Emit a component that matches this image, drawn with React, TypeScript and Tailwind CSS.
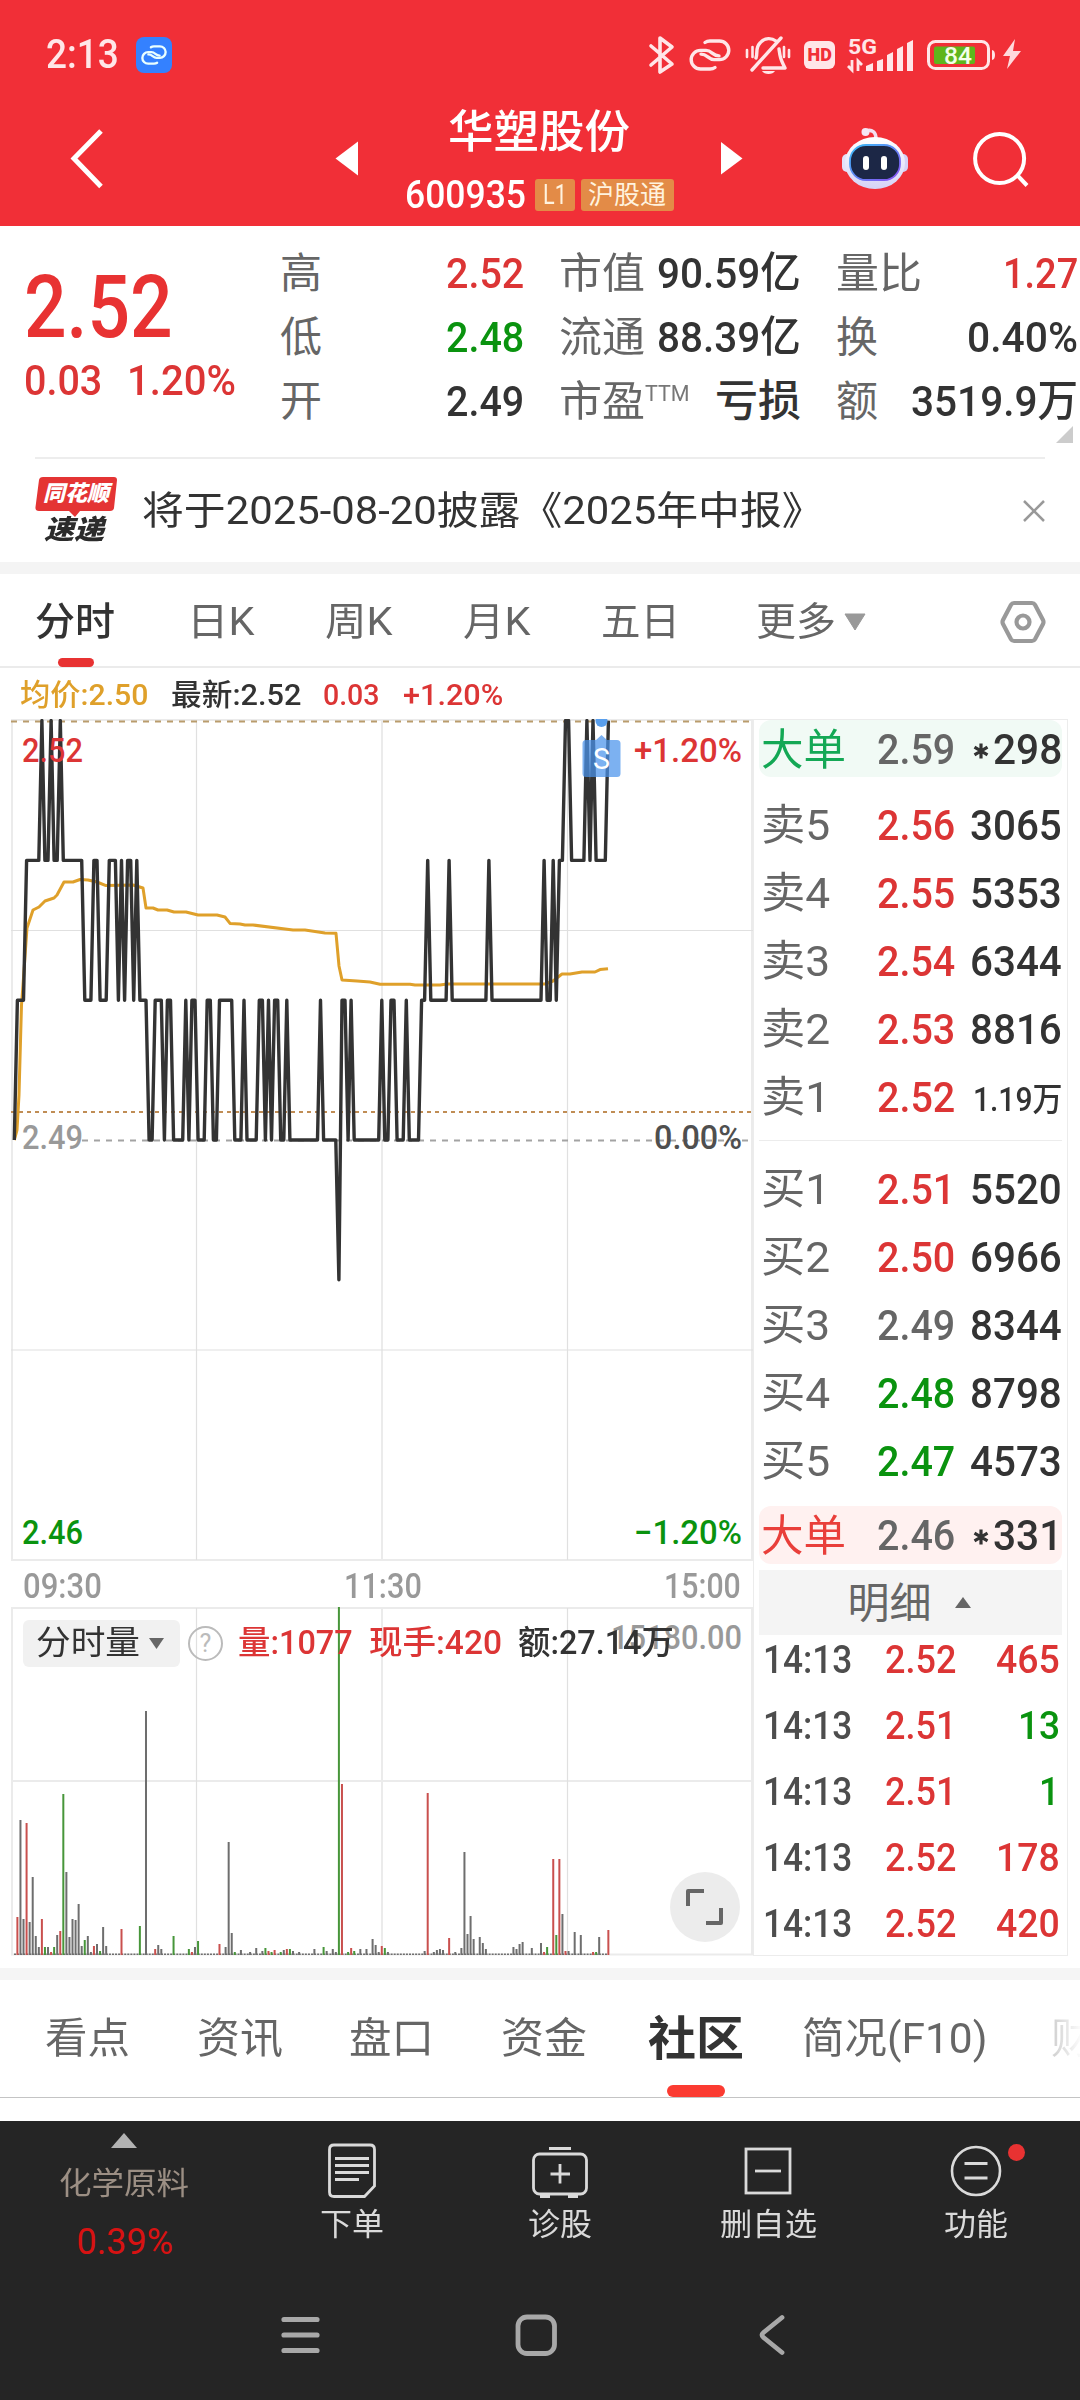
import { useLayoutEffect, useRef, type ReactNode } from 'react';
import clsx from 'clsx';

const RED = '#dc3535';
const GREEN = '#0a930f';
const INK = '#333333';

// Stretches a single line of text to the width given by its class.
function Fit({ className, children }: { className: string; children: ReactNode }) {
  const outer = useRef<HTMLSpanElement>(null);
  const inner = useRef<HTMLSpanElement>(null);

  useLayoutEffect(() => {
    if (!outer.current || !inner.current) return;
    const scale = outer.current.clientWidth / inner.current.offsetWidth;
    inner.current.style.transform = `scaleX(${scale})`;
  });

  return (
    <span ref={outer} className={clsx('block shrink-0 whitespace-nowrap', className)}>
      <span ref={inner} className="inline-block origin-left">
        {children}
      </span>
    </span>
  );
}

type IconProps = { box: [number, number, number, number]; className?: string; children: ReactNode };

function Icon({ box, className, children }: IconProps) {
  return (
    <svg
      viewBox={box.join(' ')}
      width={box[2]}
      height={box[3]}
      fill="none"
      className={clsx('block shrink-0', className)}
    >
      {children}
    </svg>
  );
}

function LinkGlyph({ color, width }: { color: string; width: number }) {
  return (
    <g stroke={color} strokeWidth={width} strokeLinecap="round">
      <path d="M26 28.500q-2 1.500-5 1.500H11.500a9.300 9.300 0 0 1 0-18.600H17c6 0 6.500 5.500 13 5.500" />
      <path d="M16 3.500Q18 2 21 2h9.500a9.300 9.300 0 0 1 0 18.600H25c-6 0-6.500-5.500-13-5.500" />
    </g>
  );
}

function StatusBar() {
  return (
    <div className="flex h-24 items-center pt-[13px] text-[#ffe6e8]">
      <Fit className="ml-[46px] w-[73px] text-[40px] leading-[46px] font-medium">2:13</Fit>
      <div className="ml-[17px] flex size-9 items-center justify-center rounded-lg bg-[#3481ff]">
        <svg viewBox="0 0 42 32" width="26" height="20" fill="none">
          <LinkGlyph color="#eaffff" width={3.8} />
        </svg>
      </div>
      <Icon box={[648, 34, 27, 40]} className="ml-[476px]">
        <path
          d="M651 45l21 18-12 8V37l12 9-21 18"
          stroke="#ffe6e8"
          strokeWidth="3.6"
          strokeLinejoin="round"
          strokeLinecap="round"
        />
      </Icon>
      <svg viewBox="0 0 42 32" width="42" height="32" fill="none" className="ml-3.5">
        <LinkGlyph color="#ffe6e8" width={3.4} />
      </svg>
      <Icon box={[745, 35, 46, 40]} className="ml-3.5">
        <g stroke="#ffe6e8" strokeWidth="3.4" strokeLinecap="round">
          <path d="M781 38l-29 32" />
          <path d="M756 58c2-5-1-10 4-15 5-6 12-5 16-2" />
          <path d="M779 49c1 7 1 9 6 19h-22" strokeLinejoin="round" />
          <path d="M747 50v7M752.500 47v10M784 47v10M789 50v7" strokeWidth="2.6" />
        </g>
        <path d="M762 71h13c-2 4-11 4-13 0z" fill="#ffe6e8" />
      </Icon>
      <div className="ml-[13px] flex h-7 w-[31px] items-center justify-center rounded-md bg-[#ffe6e8]">
        <Fit className="w-[24px] text-[18px] leading-7 font-black text-[#f12f37]">HD</Fit>
      </div>
      <Icon box={[845, 34, 70, 38]} className="ml-2.5">
        <text x="848" y="52" fill="#ffe6e8" fontSize="21" fontWeight="700" textLength="29" lengthAdjust="spacingAndGlyphs">
          5G
        </text>
        <path
          d="M866 64l7-3v8h-7zM877 59l6-2v12h-6zM887 53l6-3v19h-6zM897 47l6-3v25h-6zM907 41l6-3v31h-6z"
          fill="#ffe6e8"
        />
        <path d="M852 58v10l-4-4M858 69V59l4 4" stroke="#ffe6e8" strokeWidth="2.8" />
      </Icon>
      <Icon box={[925, 37, 72, 34]} className="ml-2.5">
        <rect x="928.500" y="40.500" width="60" height="27" rx="7" stroke="#ffe6e8" strokeWidth="3" />
        <rect x="934" y="45.500" width="41" height="17.500" rx="2" fill="#5fb51c" />
        <path d="M992 49c4 0 4 10 0 10z" fill="#ffe6e8" />
        <text x="944" y="62.500" fill="#f4ffe9" fontSize="23" fontWeight="500" textLength="28" lengthAdjust="spacingAndGlyphs">
          84
        </text>
      </Icon>
      <Icon box={[1002, 38, 20, 33]} className="ml-[5px]">
        <path d="M1015 39l-12 17h7l-3 13 14-18h-8z" fill="#ffd9dc" />
      </Icon>
    </div>
  );
}

function TitleBar() {
  return (
    <div className="flex h-[130px] items-center pb-[5px]">
      <Icon box={[69, 126, 38, 64]} className="ml-[69px]">
        <path d="M101 130L74 157.500 101 185.500" stroke="#fff" strokeWidth="5" />
      </Icon>
      <Icon box={[335, 142, 23, 36]} className="ml-[228px]">
        <path d="M358 142.500v34L335.500 159.500z" fill="#fff" />
      </Icon>
      <div className="mr-px ml-[46px] flex w-[270px] flex-col items-center">
        <Fit className="w-[182px] text-[45px] leading-[52px] font-medium text-white">华塑股份</Fit>
        <div className="mt-5 flex h-8 items-center">
          <Fit className="w-[121px] text-[39px] leading-8 font-medium text-white">600935</Fit>
          <div className="ml-[9px] flex h-8 w-10 items-center justify-center rounded-[3px] bg-[#e38b47]">
            <Fit className="w-[24px] text-[27px] leading-8 text-[#fff3df]">L1</Fit>
          </div>
          <div className="ml-1.5 flex h-8 w-[93px] items-center justify-center rounded-[3px] bg-[#e38b47]">
            <Fit className="w-[78px] text-[26px] leading-8 text-[#fff3df]">沪股通</Fit>
          </div>
        </div>
      </div>
      <Icon box={[721, 142, 22, 36]} className="ml-[46px]">
        <path d="M721 143v32.500l21.500-16z" fill="#fff" />
      </Icon>
      <Icon box={[840, 125, 70, 66]} className="ml-[97px]">
        <defs>
          <linearGradient id="shell" x1="0" y1="0" x2="0" y2="1">
            <stop offset="0" stopColor="#ffffff" />
            <stop offset="1" stopColor="#d5d3f6" />
          </linearGradient>
          <linearGradient id="visor" x1="0" y1="0" x2="1" y2="1">
            <stop offset="0" stopColor="#38bdf8" />
            <stop offset="1" stopColor="#8b4df0" />
          </linearGradient>
        </defs>
        <path d="M866 130c6-2 10 1 10 8" stroke="#f3dff0" strokeWidth="3.500" />
        <circle cx="865.500" cy="131" r="4" fill="#f6e6f4" />
        <rect x="842" y="153" width="12" height="18" rx="5" fill="#e3e1fb" />
        <rect x="896" y="153" width="12" height="18" rx="5" fill="#d5d1f7" />
        <ellipse cx="875" cy="162" rx="30" ry="26" fill="url(#shell)" />
        <rect x="850" y="144" width="50" height="35" rx="16" fill="#1c2746" stroke="url(#visor)" strokeWidth="1.800" />
        <rect x="863" y="155" width="6" height="14" rx="3" fill="#fff" />
        <rect x="881" y="155" width="6" height="14" rx="3" fill="#fff" />
      </Icon>
      <Icon box={[970, 128, 60, 62]} className="ml-[60px]">
        <circle cx="999.600" cy="158.500" r="24.500" stroke="#fff" strokeWidth="4" />
        <path d="M1017 175l10 10.500" stroke="#fff" strokeWidth="4" />
      </Icon>
    </div>
  );
}

type Stat = { label: string; labelW: string; value: string; valueW: string; tone: string; sup?: string };

const STATS: Stat[][] = [
  [
    { label: '高', labelW: 'w-[42px]', value: '2.52', valueW: 'w-[78px]', tone: 'text-[#dc3535]' },
    { label: '低', labelW: 'w-[42px]', value: '2.48', valueW: 'w-[78px]', tone: 'text-[#0a930f]' },
    { label: '开', labelW: 'w-[42px]', value: '2.49', valueW: 'w-[78px]', tone: 'text-[#333]' },
  ],
  [
    { label: '市值', labelW: 'w-[86px]', value: '90.59亿', valueW: 'w-[144px]', tone: 'text-[#333]' },
    { label: '流通', labelW: 'w-[86px]', value: '88.39亿', valueW: 'w-[144px]', tone: 'text-[#333]' },
    { label: '市盈', labelW: 'w-[86px]', value: '亏损', valueW: 'w-[86px]', tone: 'text-[#333]', sup: 'TTM' },
  ],
  [
    { label: '量比', labelW: 'w-[86px]', value: '1.27', valueW: 'w-[75px]', tone: 'text-[#dc3535]' },
    { label: '换', labelW: 'w-[42px]', value: '0.40%', valueW: 'w-[111px]', tone: 'text-[#333]' },
    { label: '额', labelW: 'w-[42px]', value: '3519.9万', valueW: 'w-[167px]', tone: 'text-[#333]' },
  ],
];

function QuoteSummary() {
  return (
    <section className="relative flex h-[231px] pt-[15px]">
      <div className="w-[280px] shrink-0 pl-6">
        <Fit className="mt-4 w-[149px] text-[87px] leading-[100px] font-medium text-[#e83232]">2.52</Fit>
        <div className="flex text-[43px] leading-[46px] font-medium text-[#dc3535]">
          <Fit className="w-[78px]">0.03</Fit>
          <Fit className="ml-[25px] w-[109px]">1.20%</Fit>
        </div>
      </div>
      <div className="flex gap-[35px]">
        {STATS.map((column, c) => (
          <div key={c} className={c === 0 ? 'w-[244px]' : 'w-[242px]'}>
            {column.map((stat) => (
              <div key={stat.label} className="flex h-16 items-center justify-between leading-[60px]">
                <div className="flex pt-0.5">
                  <Fit className={clsx('text-[42px] text-[#666]', stat.labelW)}>{stat.label}</Fit>
                  {stat.sup && <Fit className="w-[45px] text-[22px] leading-[44px] text-[#777]">{stat.sup}</Fit>}
                </div>
                <Fit className={clsx('text-[43px] font-medium', stat.valueW, stat.tone)}>{stat.value}</Fit>
              </div>
            ))}
          </div>
        ))}
      </div>
      <Icon box={[0, 0, 17, 17]} className="absolute right-[7px] bottom-[14px]">
        <path d="M17 0v17H0z" fill="#ccc" />
      </Icon>
    </section>
  );
}

function NoticeBar() {
  return (
    <div className="mx-[35px] flex h-[105px] items-center border-t-2 border-[#ededed]">
      <div className="relative flex h-[68px] w-[82px] flex-col items-center italic">
        <Icon box={[0, 0, 82, 40]} className="absolute top-0 left-0">
          <path
            d="M8 0h71q3 0 3 3l-3 28q-.500 3-4 3H45l-5 6-6-6H4q-4 0-3.500-4L4 3q.500-3 4-3z"
            fill="#e43434"
          />
        </Icon>
        <Fit className="relative w-[66px] text-[22px] leading-[34px] font-black text-white">同花顺</Fit>
        <Fit className="mr-1 w-[60px] text-[27px] leading-[38px] font-black text-[#2c2c2c]">速递</Fit>
      </div>
      <Fit className="ml-[25px] w-[682px] text-[39px] leading-[50px] text-[#333]">
        将于2025-08-20披露《2025年中报》
      </Fit>
      <Icon box={[0, 0, 22, 22]} className="ml-auto">
        <path d="M1 1l20 20M21 1L1 21" stroke="#999" strokeWidth="2.500" />
      </Icon>
    </div>
  );
}

function PeriodTabs() {
  return (
    <nav className="flex h-[94px] items-center border-b-2 border-[#ebebeb] pt-[3px] text-[39px] leading-[50px] text-[#666]">
      <div className="relative ml-[35px] font-medium text-[#333]">
        <Fit className="w-[80px]">分时</Fit>
        <span className="absolute top-[61px] left-[23px] h-[9px] w-9 rounded-full bg-[#e83232]" />
      </div>
      <Fit className="ml-[72px] w-[67px]">日K</Fit>
      <Fit className="ml-[71px] w-[67px]">周K</Fit>
      <Fit className="ml-[71px] w-[67px]">月K</Fit>
      <Fit className="ml-[71px] w-[79px]">五日</Fit>
      <Fit className="ml-[76px] w-[80px]">更多</Fit>
      <Icon box={[0, 0, 22, 18]} className="ml-2">
        <path d="M1 1h20L11 17z" fill="#999" stroke="#999" strokeLinejoin="round" />
      </Icon>
      <Icon box={[0, 0, 46, 46]} className="ml-[134px]">
        <path
          d="M14 4h18q2 0 3 1.700l8 15.300q1 2 0 4l-8 15.300q-1 1.700-3 1.700H14q-2 0-3-1.700L3 25q-1-2 0-4l8-15.300Q12 4 14 4z"
          stroke="#999"
          strokeWidth="4.200"
        />
        <circle cx="23" cy="23" r="6.500" stroke="#999" strokeWidth="4.200" />
      </Icon>
    </nav>
  );
}

const minuteX = (minute: number) => 14.33 + minute * 3.062;
const priceY = (price: number) => 1140 - (price - 249) * 139.8;

// [minute, price in cents], only where the line turns
const PRICE: [number, number][] = [
  [0, 249], [1, 250], [3, 250], [4, 251], [8, 251], [9, 252], [10, 251], [11, 251], [12, 252], [13, 251],
  [14, 251], [15, 252], [16, 251], [22, 251], [23, 250], [25, 250], [26, 251], [27, 251], [28, 250], [30, 250],
  [31, 251], [33, 251], [34, 250], [35, 251], [36, 250], [37, 251], [38, 251], [39, 250], [40, 251], [41, 250],
  [43, 250], [44, 249], [45, 249], [46, 250], [48, 250], [49, 249], [50, 250], [51, 250], [52, 249], [55, 249],
  [56, 250], [57, 249], [58, 250], [59, 250], [60, 249], [62, 249], [63, 250], [64, 250], [65, 249], [66, 249],
  [67, 250], [71, 250], [72, 249], [74, 249], [75, 250], [76, 249], [79, 249], [80, 250], [81, 250], [82, 249],
  [83, 250], [84, 249], [85, 250], [86, 250], [87, 249], [88, 249], [89, 250], [90, 249], [99, 249], [100, 250],
  [101, 249], [105, 249], [106, 248], [107, 250], [108, 250], [109, 249], [110, 250], [111, 249], [119, 249],
  [120, 250], [121, 249], [122, 249], [123, 250], [124, 250], [125, 249], [127, 249], [128, 250], [129, 249],
  [132, 249], [133, 250], [134, 250], [135, 251], [136, 250], [141, 250], [142, 251], [143, 250], [154, 250],
  [155, 251], [156, 250], [172, 250], [173, 251], [174, 250], [175, 250], [176, 251], [177, 250], [178, 251],
  [179, 251], [180, 252], [181, 252], [182, 251], [186, 251], [187, 252], [188, 251], [189, 252], [190, 251],
  [193, 251], [194, 252],
];

const AVERAGE =
  '14.3,1140 17,1130 19,1095 21.5,1005 23,985 27,928 33,910 39,907 45,901 54,898 57,895 64,882 73,882 80,879.5 88,880 97,882 106,885.600 133,885 143,888 146,908 153,908 158,910 167,910 174,912 186,912 198,915 217,915 225,917 230,923.400 240,924 245,925 253,925 293,930 305,930 325,933 336,933.300 339,966 342,980 357,981 370,982 380,984.300 410,984.300 415,985 440,985 447,984 545,984 553,981 562,974 570,974 582,972 595,972 600,969.600 608,968.700';

const label = { fontSize: 33, fontWeight: 500, lengthAdjust: 'spacingAndGlyphs' as const };

function PriceChart() {
  const line = PRICE.map(([m, p]) => `${minuteX(m).toFixed(1)},${priceY(p).toFixed(1)}`).join(' ');

  return (
    <Icon box={[0, 719, 753, 843]}>
      <g stroke="#ebebeb" strokeWidth="2">
        <path d="M12 719v842M752 719v842M382 720v840M11 720h742M11 1560h742" />
        <path d="M196.500 720v840M567.500 720v840M11 930.500h742M11 1350h742" stroke="#e0e0e0" strokeWidth="1.200" />
      </g>
      <path d="M11 721.500h742" stroke="#b99c6c" strokeWidth="1.800" strokeDasharray="6 6" />
      <path d="M11 1112h742" stroke="#c08d55" strokeWidth="2" strokeDasharray="4 4" />
      <path d="M82 1140.500h670" stroke="#a3a3a3" strokeWidth="1.800" strokeDasharray="6 6" />
      <polyline points={AVERAGE} stroke="#dfa02a" strokeWidth="3" strokeLinejoin="round" />
      <polyline points={line} stroke={INK} strokeWidth="3.400" strokeLinejoin="round" />

      <circle cx="601.500" cy="721" r="6" fill="#5a9fec" />
      <path
        d="M586 740h10l5.500-5 5.500 5h10q3.500 0 3.500 3.500v30q0 3.500-3.500 3.500h-31q-3.500 0-3.500-3.500v-30q0-3.500 3.500-3.500z"
        fill="#4a93ec"
        fillOpacity="0.72"
      />
      <text x="593" y="769" fill="#fff" fontSize="29" textLength="17" lengthAdjust="spacingAndGlyphs">S</text>

      <text x="22" y="762" fill={RED} textLength="61" {...label}>2.52</text>
      <text x="22" y="1148.500" fill="#999" textLength="61" {...label}>2.49</text>
      <text x="22" y="1544" fill={GREEN} textLength="61" {...label}>2.46</text>
      <text x="634" y="762" fill={RED} textLength="108" {...label}>+1.20%</text>
      <text x="654" y="1148.500" fill="#4f4f4f" textLength="88" {...label}>0.00%</text>
      <text x="634" y="1544" fill={GREEN} textLength="108" {...label}>−1.20%</text>
    </Icon>
  );
}

// [minute, height, colour]: r = up, g = down, k = flat
const VOLUME: [number, number, string][] = [
  [1, 38, 'r'], [2, 135, 'k'], [3, 36, 'k'], [4, 132, 'r'], [5, 33, 'k'], [6, 78, 'k'], [7, 19, 'k'], [8, 8, 'k'],
  [9, 36, 'r'], [10, 8, 'g'], [11, 8, 'k'], [12, 3, 'r'], [13, 8, 'g'], [14, 20, 'k'], [15, 24, 'r'], [16, 161, 'g'],
  [17, 83, 'k'], [18, 18, 'k'], [19, 36, 'k'], [20, 35, 'k'], [21, 51, 'k'], [22, 9, 'k'], [23, 15, 'g'],
  [24, 19, 'k'], [25, 3, 'k'], [26, 9, 'r'], [27, 11, 'k'], [28, 4, 'g'], [29, 28, 'k'], [30, 9, 'k'],
  [35, 26, 'r'], [41, 29, 'g'], [43, 244, 'k'], [46, 6, 'r'], [47, 10, 'k'], [48, 6, 'k'], [52, 19, 'g'],
  [57, 6, 'g'], [58, 3, 'r'], [59, 8, 'k'], [60, 14, 'g'], [67, 11, 'r'], [69, 8, 'k'], [70, 113, 'k'],
  [71, 22, 'k'], [72, 3, 'g'], [74, 5, 'k'], [77, 3, 'k'], [79, 7, 'k'], [81, 4, 'k'], [82, 7, 'g'], [83, 4, 'r'],
  [84, 3, 'g'], [85, 5, 'r'], [87, 3, 'g'], [88, 5, 'k'], [89, 6, 'r'], [90, 6, 'g'], [91, 4, 'k'], [93, 3, 'k'],
  [98, 6, 'k'], [101, 8, 'g'], [102, 4, 'k'], [104, 6, 'k'], [105, 3, 'k'], [106, 348, 'g'], [107, 171, 'r'],
  [109, 3, 'g'], [110, 7, 'r'], [111, 4, 'g'], [113, 6, 'k'], [115, 6, 'k'], [117, 16, 'k'], [118, 10, 'k'],
  [119, 3, 'k'], [120, 9, 'r'], [121, 7, 'g'], [122, 3, 'k'], [134, 4, 'k'], [135, 162, 'r'], [137, 3, 'k'],
  [138, 5, 'k'], [139, 6, 'k'], [140, 5, 'k'], [142, 17, 'r'], [144, 3, 'k'], [146, 7, 'k'], [147, 103, 'k'],
  [148, 21, 'k'], [149, 39, 'k'], [150, 16, 'k'], [152, 18, 'k'], [153, 12, 'k'], [154, 6, 'k'], [163, 8, 'k'],
  [164, 6, 'k'], [165, 11, 'k'], [166, 13, 'k'], [169, 7, 'k'], [172, 12, 'k'], [173, 3, 'r'], [174, 8, 'g'],
  [176, 96, 'r'], [177, 20, 'g'], [178, 96, 'r'], [179, 41, 'k'], [180, 4, 'r'], [181, 4, 'k'], [183, 23, 'k'],
  [185, 20, 'k'], [189, 3, 'r'], [190, 3, 'g'], [191, 18, 'k'], [194, 25, 'r'],
];

const BAR: Record<string, string> = { r: '#c9504e', g: '#47963a', k: '#6e6e6e' };

function VolumeChart() {
  return (
    <div className="relative">
      <Icon box={[0, 1607, 753, 350]}>
        <g stroke="#ebebeb" strokeWidth="2">
          <path d="M12 1607v348M752 1607v348M382 1608v347M11 1608h742M11 1781h742M11 1954.500h742" />
          <path d="M196.500 1608v347M567.500 1608v347" stroke="#e0e0e0" strokeWidth="1.200" />
        </g>
        <text x="611" y="1649" fill="#999" textLength="131" {...label} fontSize={34}>15180.00</text>
        <path d="M14 1954.300h595" stroke={BAR.k} strokeWidth="1.400" strokeDasharray="2 1.062" />
        {VOLUME.map(([m, h, c]) => (
          <rect key={m} x={minuteX(m) - 1} y={1955 - h} width="2" height={h} fill={BAR[c]} />
        ))}
      </Icon>
      <div className="absolute top-3 left-[23px] flex h-12 items-center text-[33px] font-medium">
        <div className="flex h-[47px] w-[157px] items-center rounded-md bg-[#f1f1f1] pl-[13px]">
          <Fit className="w-[104px] font-normal text-[#333]">分时量</Fit>
          <Icon box={[0, 0, 17, 11]} className="ml-2">
            <path d="M1 0h15L8.500 11z" fill="#666" />
          </Icon>
        </div>
        <div className="ml-2 flex size-[35px] items-center justify-center rounded-full border-[2.500px] border-[#bbb] text-[25px] leading-none font-normal text-[#bbb]">
          ?
        </div>
        <Fit className="ml-[15px] w-[115px] text-[#dc3535]">量:1077</Fit>
        <Fit className="ml-4 w-[133px] text-[#dc3535]">现手:420</Fit>
        <Fit className="ml-4 w-[156px] text-[#333]">额:27.14万</Fit>
      </div>
      <div className="absolute top-[265px] left-[670px] flex size-[70px] items-center justify-center rounded-full bg-[#ececec]">
        <Icon box={[685, 1887, 40, 40]}>
          <path d="M688 1906v-15h16M706 1923h15v-15" stroke="#666" strokeWidth="4" strokeLinejoin="round" />
        </Icon>
      </div>
    </div>
  );
}

type Level = { name: string; price: string; qty: string; tone: string };

const UP = 'text-[#dc3535]';
const DOWN = 'text-[#0a930f]';
const FLAT = 'text-[#666]';

const ASKS: Level[] = [
  { name: '卖5', price: '2.56', qty: '3065', tone: UP },
  { name: '卖4', price: '2.55', qty: '5353', tone: UP },
  { name: '卖3', price: '2.54', qty: '6344', tone: UP },
  { name: '卖2', price: '2.53', qty: '8816', tone: UP },
  { name: '卖1', price: '2.52', qty: '1.19万', tone: UP },
];

const BIDS: Level[] = [
  { name: '买1', price: '2.51', qty: '5520', tone: UP },
  { name: '买2', price: '2.50', qty: '6966', tone: UP },
  { name: '买3', price: '2.49', qty: '8344', tone: FLAT },
  { name: '买4', price: '2.48', qty: '8798', tone: DOWN },
  { name: '买5', price: '2.47', qty: '4573', tone: DOWN },
];

const TRADES = [
  { price: '2.52', qty: '465', width: 'w-[64px]', tone: UP },
  { price: '2.51', qty: '13', width: 'w-[42px]', tone: DOWN },
  { price: '2.51', qty: '1', width: 'w-[21px]', tone: DOWN },
  { price: '2.52', qty: '178', width: 'w-[64px]', tone: UP },
  { price: '2.52', qty: '420', width: 'w-[64px]', tone: UP },
];

function LevelRow({ level }: { level: Level }) {
  return (
    <div className="flex h-[67.900px] items-center pl-0.5 text-[43px] leading-[60px] font-medium">
      <Fit className="w-[69px] font-normal text-[#666]">{level.name}</Fit>
      <Fit className={clsx('ml-[47px] w-[78px]', level.tone)}>{level.price}</Fit>
      {level.qty.endsWith('万') ? (
        <Fit className="mt-1.5 ml-auto w-[89px] text-[33px] text-[#333]">{level.qty}</Fit>
      ) : (
        <Fit className="ml-auto w-[92px] text-[#333]">{level.qty}</Fit>
      )}
    </div>
  );
}

function BigOrder({ price, qty, className }: { price: string; qty: string; className: string }) {
  return (
    <div className={clsx('flex items-center rounded-xl pl-0.5 text-[43px] leading-[56px] font-medium', className)}>
      <Fit className="mt-0.5 w-[85px] font-normal">大单</Fit>
      <Fit className="ml-[31px] w-[78px] text-[#666]">{price}</Fit>
      <svg viewBox="0 0 16 16" width="16" height="16" className="mt-1 ml-auto">
        <path d="M8 0.500v15M1.500 4.200l13 7.600M14.500 4.200l-13 7.600" stroke={INK} strokeWidth="3.200" />
      </svg>
      <Fit className="ml-1 w-[69px] text-[#333]">{qty}</Fit>
    </div>
  );
}

function OrderBook() {
  return (
    <aside className="h-[1237px] w-[315px] border border-[#ececec] px-[5px]">
      <BigOrder price="2.59" qty="298" className="h-[57px] bg-[#f1faf5] text-[#14a855]" />
      <div className="mt-[14px]">
        {ASKS.map((level) => (
          <LevelRow key={level.name} level={level} />
        ))}
      </div>
      <div className="mt-[10px] h-px bg-[#ececec]" />
      <div className="mt-[14px]">
        {BIDS.map((level) => (
          <LevelRow key={level.name} level={level} />
        ))}
      </div>
      <BigOrder price="2.46" qty="331" className="mt-[11px] h-[58px] bg-[#fff1f0] text-[#e93f3a]" />
      <div className="mt-1.5 flex h-[65px] items-center justify-center bg-[#f4f4f4] pr-[3px] text-[42px] leading-[60px] text-[#666]">
        <Fit className="mt-1 w-[84px]">明细</Fit>
        <Icon box={[0, 0, 16, 11]} className="ml-[23px]">
          <path d="M0 11L8 0l8 11z" fill="#666" />
        </Icon>
      </div>
      <div className="-mt-2">
        {TRADES.map((trade, i) => (
          <div key={i} className="flex h-[66px] items-center pr-0.5 pl-1 text-[38px] leading-[56px] font-medium">
            <Fit className="w-[89px] text-[#4d4d4d]">14:13</Fit>
            <Fit className="ml-[33px] w-[71px] text-[#dc3535]">{trade.price}</Fit>
            <Fit className={clsx('ml-auto', trade.width, trade.tone)}>{trade.qty}</Fit>
          </div>
        ))}
      </div>
    </aside>
  );
}

function ChartArea() {
  return (
    <section className="flex h-[1300px]">
      <div className="w-[753px] shrink-0">
        <div className="flex h-[51px] items-center pt-[3px] pl-5 text-[30px] leading-[44px] font-medium text-[#dc3535]">
          <Fit className="w-[128px] text-[#dfa02a]">均价:2.50</Fit>
          <Fit className="ml-[23px] w-[130px] text-[#333]">最新:2.52</Fit>
          <Fit className="ml-[22px] w-[57px]">0.03</Fit>
          <Fit className="ml-[23px] w-[100px]">+1.20%</Fit>
        </div>
        <PriceChart />
        <div className="flex h-[45px] items-center justify-between pt-[4px] pr-3 pl-[23px] text-[35px] leading-[41px] font-medium text-[#999]">
          <Fit className="w-[79px]">09:30</Fit>
          <Fit className="w-[78px]">11:30</Fit>
          <Fit className="w-[77px]">15:00</Fit>
        </div>
        <VolumeChart />
      </div>
      <div className="pt-[51px]">
        <OrderBook />
      </div>
    </section>
  );
}

function SectionTabs() {
  return (
    <nav className="flex h-[118px] items-center border-b border-[#c4c4c4] pt-px text-[42px] leading-[60px] text-[#666]">
      <Fit className="ml-[45px] w-[85px]">看点</Fit>
      <Fit className="ml-[67px] w-[86px]">资讯</Fit>
      <Fit className="ml-[66px] w-[85px]">盘口</Fit>
      <Fit className="ml-[67px] w-[86px]">资金</Fit>
      <div className="relative ml-[61px] text-[47px] font-bold text-[#333]">
        <Fit className="w-[96px]">社区</Fit>
        <span className="absolute top-[76px] left-[19px] h-3 w-[58px] rounded-full bg-[#fb3b31]" />
      </div>
      <Fit className="ml-[58px] w-[185px]">简况(F10)</Fit>
      <div className="ml-16 w-[30px] overflow-hidden whitespace-nowrap">
        <span className="bg-linear-to-r from-[#d4d4d4] from-10% to-white to-75% bg-clip-text text-transparent">财</span>
      </div>
    </nav>
  );
}

function ActionBar() {
  return (
    <div className="flex h-[155px] text-[31px] leading-[40px] text-[#dadada]">
      <div className="flex w-[248px] flex-col items-center pt-3">
        <Icon box={[0, 0, 26, 15]}>
          <path d="M13 0l13 15H0z" fill="#b3b3b3" />
        </Icon>
        <Fit className="mt-4 w-[130px] text-[#9c8f84]">化学原料</Fit>
        <Fit className="mt-[18px] ml-0.5 w-[97px] text-[36px] text-[#d81212]">0.39%</Fit>
      </div>
      <div className="flex w-[208px] flex-col items-center pt-[22px]">
        <Icon box={[327, 2143, 50, 55]}>
          <path
            d="M334 2145h36q4.500 0 4.500 4.500V2186l-10 10.500H334q-4.500 0-4.500-4.500v-42.500q0-4.500 4.500-4.500z"
            stroke="#dadada"
            strokeWidth="2.800"
          />
          <path d="M335 2158.500h34M335 2165.500h34M335 2172.500h34M335 2179.500h24" stroke="#dadada" strokeWidth="2.800" />
        </Icon>
        <Fit className="mt-[7px] w-[64px]">下单</Fit>
      </div>
      <div className="flex w-[208px] flex-col items-center pt-[26px]">
        <Icon box={[530, 2147, 60, 52]}>
          <rect x="533.500" y="2154" width="53" height="40" rx="6" stroke="#dadada" strokeWidth="2.800" />
          <path
            d="M549 2148.500h22M550.500 2174h19.500M560 2164v19.500M540 2196.500h10M568 2196.500h10"
            stroke="#dadada"
            strokeWidth="2.800"
          />
        </Icon>
        <Fit className="mt-1.5 w-[64px]">诊股</Fit>
      </div>
      <div className="flex w-[208px] flex-col items-center pt-[26px]">
        <Icon box={[744, 2147, 48, 48]}>
          <rect x="746" y="2149" width="44" height="44" stroke="#dadada" strokeWidth="2.800" />
          <path d="M755 2171h26" stroke="#dadada" strokeWidth="2.800" />
        </Icon>
        <Fit className="mt-2.5 w-[97px]">删自选</Fit>
      </div>
      <div className="relative flex w-[208px] flex-col items-center pt-6">
        <Icon box={[950, 2145, 52, 52]}>
          <circle cx="976" cy="2171" r="24" stroke="#dadada" strokeWidth="2.600" />
          <path d="M964.500 2163.500h23M964.500 2178h23" stroke="#dadada" strokeWidth="2.800" />
        </Icon>
        <span className="absolute top-[23px] left-[136px] size-[17px] rounded-full bg-[#e83232]" />
        <Fit className="mt-2 w-[64px]">功能</Fit>
      </div>
    </div>
  );
}

function SystemNav() {
  return (
    <div className="flex h-[118px] items-center pl-[280px]">
      <Icon box={[280, 2314, 41, 42]}>
        <path d="M284 2319.500h33M284 2335h33M284 2350.500h33" stroke="#a8a8a8" strokeWidth="5.200" strokeLinecap="round" />
      </Icon>
      <Icon box={[515, 2314, 43, 42]} className="ml-[194px]">
        <rect x="518" y="2317" width="36.500" height="36.500" rx="9" stroke="#a8a8a8" strokeWidth="4.800" />
      </Icon>
      <Icon box={[757, 2313, 30, 44]} className="ml-[199px]">
        <path
          d="M782 2317.500L763.500 2332.500q-3 2.500 0 5L782 2352.500"
          stroke="#a8a8a8"
          strokeWidth="4.800"
          strokeLinecap="round"
        />
      </Icon>
    </div>
  );
}

export default function App() {
  return (
    <div className="h-[2400px] w-[1080px] overflow-hidden bg-white font-['Roboto','Noto_Sans_CJK_SC',sans-serif]">
      <header className="h-[226px] bg-[#f12f37]">
        <StatusBar />
        <TitleBar />
      </header>
      <QuoteSummary />
      <NoticeBar />
      <div className="h-3 bg-[#f4f4f4]" />
      <PeriodTabs />
      <ChartArea />
      <div className="h-3 bg-[#f5f5f5]" />
      <SectionTabs />
      <div className="h-[23px]" />
      <footer className="h-[279px] bg-[#252525]">
        <ActionBar />
        <SystemNav />
      </footer>
    </div>
  );
}
